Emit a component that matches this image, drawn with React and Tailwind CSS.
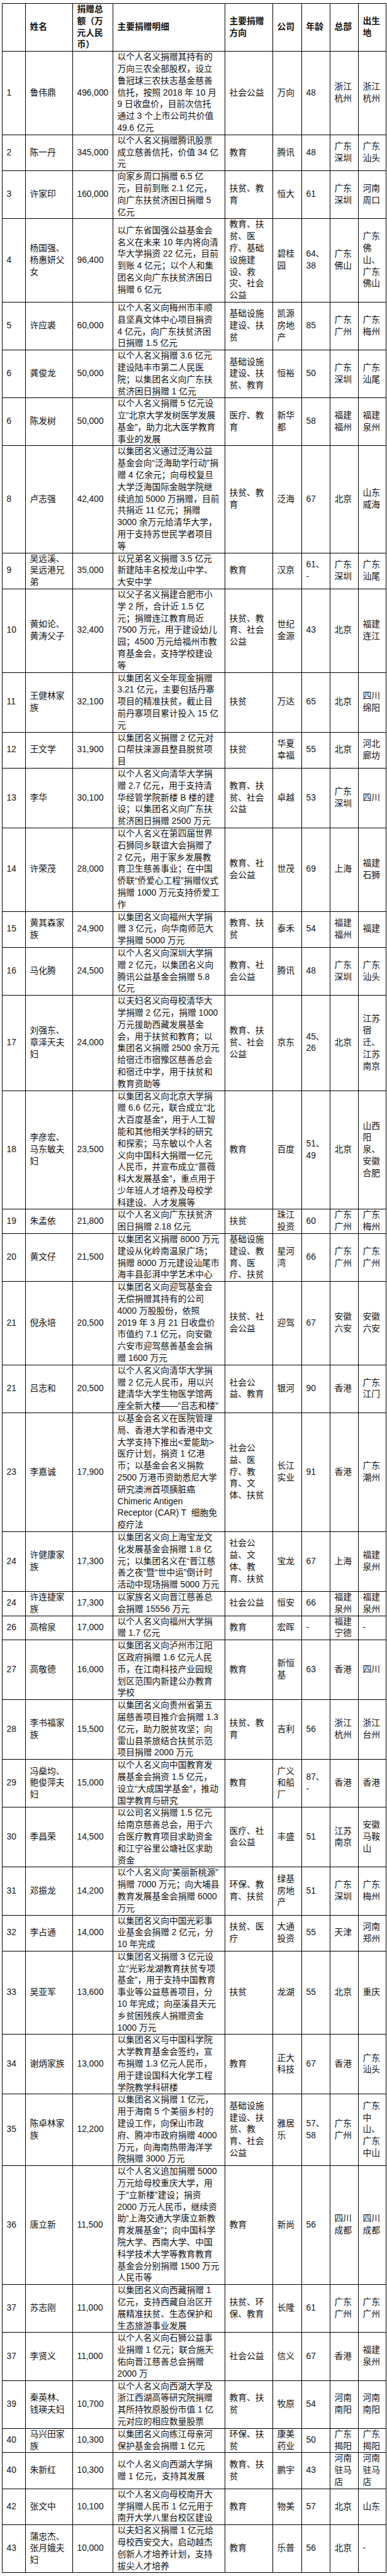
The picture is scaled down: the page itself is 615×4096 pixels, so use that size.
import React from 'react';

// rank, name, amount, detail, direction, company, age, hq, birthplace
const rows = [
  ['1', '鲁伟鼎', '496,000', '以个人名义捐赠其持有的\n万向三农全部股权，设立\n鲁冠球三农扶志基金慈善\n信托，按照 2018 年 10 月\n9 日收盘价，目前次信托\n通过 3 个上市公司共价值\n49.6 亿元', '社会公益', '万向', '48', '浙江\n杭州', '浙江\n杭州'],
  ['2', '陈一丹', '345,000', '以个人名义捐赠腾讯股票\n成立慈善信托，价值 34 亿\n元', '教育', '腾讯', '48', '广东\n深圳', '广东\n汕头'],
  ['3', '许家印', '160,000', '向家乡周口捐赠 6.5 亿\n元，目前到账 2.1 亿元，\n向广东扶贫济困日捐赠 5\n亿元', '扶贫、教\n育', '恒大', '61', '广东\n深圳', '河南\n周口'],
  ['4', '杨国强、\n杨惠妍父\n女', '96,400', '以广东省国强公益基金会\n名义在未来 10 年内将向清\n华大学捐资 22 亿元，目前\n到账 4 亿元；以个人和集\n团名义向广东扶贫济困日\n捐赠 6 亿元', '教育、扶\n贫、医\n疗、基础\n设施建\n设、救\n灾、社会\n公益', '碧桂\n园', '64、\n38', '广东\n佛山', '广东\n佛\n山、\n广东\n佛山'],
  ['5', '许应裘', '60,000', '以个人名义向梅州市丰顺\n县坚真文体中心项目捐资\n4 亿元，向广东扶贫济困\n日捐赠 1.5 亿元', '基础设施\n建设、扶\n贫', '凯源\n房地\n产', '85', '广东\n广州', '广东\n梅州'],
  ['6', '龚俊龙', '50,000', '以个人名义捐赠 3.6 亿元\n建设陆丰市第二人民医\n院；以集团名义向广东扶\n贫济困日捐赠 1 亿元', '基础设施\n建设、扶\n贫、教育', '恒裕', '50', '广东\n深圳', '广东\n汕尾'],
  ['6', '陈发树', '50,000', '以个人名义捐赠 5 亿元设\n立“北京大学发树医学发展\n基金”，助力北大医学教育\n事业的发展', '医疗、教\n育', '新华\n都', '58', '福建\n福州', '福建\n泉州'],
  ['8', '卢志强', '42,400', '以集团名义通过泛海公益\n基金会向“泛海助学行动”捐\n赠 4 亿余元；向母校复旦\n大学泛海国际金融学院继\n续追加 5000 万捐赠，目前\n共捐近 11 亿元；捐赠\n3000 余万元给清华大学，\n用于支持苏世民学者项目\n等', '扶贫、教\n育', '泛海', '67', '北京', '山东\n威海'],
  ['9', '吴远溪、\n吴远港兄\n弟', '35,000', '以兄弟名义捐赠 3.5 亿元\n新建陆丰名校龙山中学、\n大安中学', '教育', '汉京', '61、\n-', '广东\n深圳', '广东\n汕尾'],
  ['10', '黄如论、\n黄涛父子', '32,400', '以父子名义捐建合肥市小\n学 2 所，合计近 1.5 亿\n元；捐赠连江教育局近\n7500 万元，用于建设幼儿\n园；4500 万元给福州市教\n育基金会，支持学校建设\n等', '扶贫、教\n育、社会\n公益', '世纪\n金源', '43', '北京', '福建\n连江'],
  ['11', '王健林家\n族', '32,100', '以集团名义全年现金捐赠\n3.21 亿元，主要包括丹寨\n项目的精准扶贫，截止目\n前丹寨项目累计投入 15 亿\n元', '扶贫', '万达', '65', '北京', '四川\n绵阳'],
  ['12', '王文学', '31,900', '以集团名义捐赠 2 亿元对\n口帮扶涞源县整县脱贫项\n目', '扶贫', '华夏\n幸福', '55', '北京', '河北\n廊坊'],
  ['13', '李华', '30,100', '以个人名义向清华大学捐\n赠 2.7 亿元，用于支持清\n华经管学院新楼 B 楼的建\n设；以集团名义向广东扶\n贫济困日捐赠 2500 万元', '教育、扶\n贫、社会\n公益', '卓越', '53', '广东\n深圳', '四川'],
  ['14', '许荣茂', '28,000', '以个人名义在第四届世界\n石狮同乡联谊大会捐赠了\n2 亿元，用于家乡发展教\n育卫生慈善事业；在中国\n侨联“侨爱心工程”捐赠仪式\n捐赠 1000 万元支持侨爱工\n作', '教育、社\n会公益', '世茂', '69', '上海', '福建\n石狮'],
  ['15', '黄其森家\n族', '24,900', '以集团名义向福州大学捐\n赠 3 亿元，向华南师范大\n学捐赠 5000 万元', '教育、扶\n贫', '泰禾', '54', '福建\n福州', '福建'],
  ['16', '马化腾', '24,500', '以个人名义向深圳大学捐\n赠 2 亿元，以集团名义向\n腾讯公益基金会捐赠 5.8\n亿元', '教育、社\n会公益', '腾讯', '48', '广东\n深圳', '广东\n汕头'],
  ['17', '刘强东、\n章泽天夫\n妇', '24,000', '以夫妇名义向母校清华大\n学捐赠 2 亿元，捐赠 1000\n万元援助西藏发展基金\n会，用于扶贫和教育；以\n集团名义捐赠 2500 余万元\n给宿迁市宿豫区慈善总会\n和宿迁中学，用于扶贫和\n教育资助等', '教育、扶\n贫、社会\n公益', '京东', '45、\n26', '北京', '江苏\n宿\n迁、\n江苏\n南京'],
  ['18', '李彦宏、\n马东敏夫\n妇', '23,500', '以集团名义向北京大学捐\n赠 6.6 亿元，联合成立“北\n大百度基金”，用于人工智\n能和其他相关学科的研究\n和探索；马东敏以个人名\n义向中国科大捐赠一亿元\n人民币，并宣布成立“蔷薇\n科大发展基金”，重点用于\n少年班人才培养及母校学\n科建设、人才发展等', '教育', '百度', '51、\n49', '北京', '山西\n阳\n泉、\n安徽\n合肥'],
  ['19', '朱孟依', '21,800', '以个人名义向广东扶贫济\n困日捐赠 2.18 亿元', '扶贫', '珠江\n投资', '60', '广东\n广州', '广东\n梅州'],
  ['20', '黄文仔', '21,500', '以集团名义捐赠 8000 万元\n建设从化岭南温泉广场；\n捐赠 8000 万元建设汕尾市\n海丰县彭湃中学艺术中心', '基础设施\n建设、教\n育、医\n疗、扶贫', '星河\n湾', '66', '广东\n广州', '广东\n广州'],
  ['21', '倪永培', '20,500', '以集团名义向迎驾基金会\n无偿捐赠其持有的公司\n4000 万股股份，依照\n2019 年 3 月 21 日收盘价\n市值约 7.1 亿元，向安徽\n六安市迎驾慈善基金会捐\n赠 1600 万元', '扶贫、社\n会公益', '迎驾', '67', '安徽\n六安', '安徽\n六安'],
  ['21', '吕志和', '20,500', '以个人名义向清华大学捐\n赠 2 亿元人民币，用以兴\n建清华大学生物医学馆两\n座全新大楼——“吕志和楼”', '社会公\n益、教育', '银河', '90', '香港', '广东\n江门'],
  ['23', '李嘉诚', '17,900', '以基金会名义在医院管理\n局、香港大学和香港中文\n大学支持下推出<爱能助>\n医疗计划，捐资 1 亿港\n币；以基金会名义捐款\n2500 万港币资助悉尼大学\n研究澳洲首项胰脏癌\nChimeric Antigen\nReceptor (CAR) T  细胞免\n疫疗法', '社会公\n益、医\n疗、教\n育、文\n体、扶贫', '长江\n实业', '91', '香港', '广东\n潮州'],
  ['24', '许健康家\n族', '17,300', '以集团名义向上海宝龙文\n化发展基金会捐赠 1.8 亿\n元；以集团名义在“晋江慈\n善之夜”暨“世中运”倒计时\n活动中现场捐赠 5000 万元', '社会公\n益、文\n体、教\n育、扶贫', '宝龙', '67', '上海', '福建\n泉州'],
  ['24', '许连捷家\n族', '17,300', '以家族名义向晋江慈善总\n会捐赠 15556 万元', '社会公益', '恒安', '66', '福建\n泉州', '福建\n泉州'],
  ['26', '高榕泉', '17,000', '以个人名义向福州大学捐\n赠 1.7 亿元', '教育', '宏晖', '-', '福建\n宁德', '-'],
  ['27', '高敬德', '16,000', '以集团名义向泸州市江阳\n区政府捐赠 1.6 亿元人民\n币，在江南科技产业园规\n划区范围内新建公办教育\n学校', '教育', '新恒\n基', '63', '香港', '四川'],
  ['28', '李书福家\n族', '15,500', '以集团名义向贵州省第五\n届慈善项目推介会捐赠 1.3\n亿元，助力脱贫攻坚；向\n雷山县茶旅结合扶贫示范\n项目捐赠 2000 万元', '扶贫、教\n育', '吉利', '56', '浙江\n杭州', '浙江\n台州'],
  ['29', '冯燊均、\n鲍俊萍夫\n妇', '15,000', '以个人名义向中国教育发\n展基金会捐资 1.5 亿元，\n设立“大成国学基金”，推动\n国学教育与研究', '教育', '广义\n和船\n厂', '87、\n-', '香港', '香港'],
  ['30', '季昌荣', '14,500', '以公司名义捐赠 1.5 亿元\n给南京慈善总会，用于六\n合医疗教育项目求助资金\n和江宁谷里公塘社区求助\n资金', '医疗、社\n会公益', '丰盛', '51', '江苏\n南京', '安徽\n马鞍\n山'],
  ['31', '邓振龙', '14,200', '以个人名义向“美丽新桃源”\n捐赠 7000 万元；向大埔县\n教育发展基金会捐赠 6000\n万元', '环保、教\n育、扶贫', '绿基\n房地\n产', '51', '广东\n深圳', '广东\n梅州'],
  ['32', '李占通', '14,000', '以集团名义向中国光彩事\n业基金会捐赠 2 亿元，分\n10 年完成', '扶贫、医\n疗', '大通\n投资', '55', '天津', '河南\n郑州'],
  ['33', '吴亚军', '13,600', '以集团名义捐赠 3 亿元设\n立“光彩龙湖教育扶贫专项\n基金”，用于支持中国教育\n事业等公益慈善项目，分\n10 年完成；向巫溪县天元\n乡贫困残疾人捐赠资金\n1000 万元', '扶贫', '龙湖', '55', '北京', '重庆'],
  ['34', '谢炳家族', '13,000', '以集团名义与中国科学院\n大学教育基金会签约，宣\n布捐赠 1.3 亿元人民币，\n用于建设国科大化学工程\n学院教学科研楼', '教育', '正大\n科技', '67', '香港', '广东\n汕头'],
  ['35', '陈卓林家\n族', '12,200', '以集团名义捐赠 1 亿元，\n用于海南 5 个美丽乡村的\n建设工作，向保山市政\n府、腾冲市政府捐赠 4000\n万元，向海南热带海洋学\n院捐赠 3000 万元', '基础设施\n建设、扶\n贫、教\n育、社会\n公益', '雅居\n乐', '57、\n58', '广东\n广州', '广东\n中\n山、\n广东\n中山'],
  ['36', '唐立新', '11,500', '以个人名义追加捐赠 5000\n万元给母校重庆大学，用\n于“立新楼”建设；捐资\n2000 万元人民币，继续资\n助“上海交通大学唐立新教\n育发展基金”；向中国科学\n院大学、西南大学、中国\n科学技术大学等教育教育\n基金会分别捐赠 1500 万元\n人民币等', '教育', '新尚', '56', '四川\n成都', '四川\n成都'],
  ['37', '苏志刚', '11,000', '以集团名义向西藏捐赠 1\n亿元，支持西藏自治区开\n展精准扶贫、生态保护和\n生态旅游事业发展', '扶贫、环\n保、教育', '长隆', '61', '广东\n广州', '广东\n广州'],
  ['37', '李贤义', '11,000', '以个人名义向石狮公益事\n业捐赠 1 亿元；联合施天\n佑向晋江慈善总会捐赠\n2000 万', '社会公益', '信义', '67', '香港', '福建\n泉州'],
  ['39', '秦英林、\n钱瑛夫妇', '10,700', '以个人名义向西湖大学及\n浙江西湖高等研究院捐赠\n其所持牧原股份市值 1 亿\n元对应的相应数量股票', '教育、扶\n贫', '牧原', '54', '河南\n南阳', '河南\n南阳'],
  ['40', '马兴田家\n族', '10,300', '以集团名义向练江母亲河\n保护基金会捐赠 1 亿元', '环保、扶\n贫', '康美\n药业', '50', '广东\n揭阳', '广东\n揭阳'],
  ['40', '朱新红', '10,300', '以个人名义向西湖大学捐\n赠 1 亿元，支持其发展', '教育、扶\n贫', '鹏宇', '43', '河南\n驻马\n店', '河南\n驻马\n店'],
  ['42', '张文中', '10,100', '以个人名义向母校南开大\n学捐赠人民币 1 亿元用于\n南开大学八里台校区建设', '教育', '物美', '57', '北京', '山东'],
  ['43', '蒲忠杰、\n张月娥夫\n妇', '10,000', '以夫妇名义捐赠 1 亿元给\n母校西安交大，启动越杰\n创新人才培养计划，支持\n拔尖人才培养', '教育', '乐普', '56', '北京', '-'],
];

const headers = ['', '姓名', '捐赠总\n额（万\n元人民\n币）', '主要捐赠明细', '主要捐赠\n方向', '公司', '年龄', '总部', '出生\n地'];

const cell = 'border border-black pl-[6.5px] pr-[2px] py-0 align-middle text-left whitespace-pre';

const App = () => {
  return (
    <div className="min-h-[4096px] bg-white pl-[3px] pt-[5px]">
      <table className="w-[610px] table-fixed border-collapse font-['Liberation_Sans','Noto_Sans_CJK_SC',sans-serif] text-[13.75px] leading-[18.79px] text-[#111]">
        <colgroup>
          <col className="w-[37px]" />
          <col className="w-[75px]" />
          <col className="w-[64px]" />
          <col className="w-[178px]" />
          <col className="w-[76px]" />
          <col className="w-[46px]" />
          <col className="w-[45px]" />
          <col className="w-[45px]" />
          <col className="w-[44px]" />
        </colgroup>
        <thead>
          <tr className="font-bold">
            {headers.map((h, i) => (
              <th key={i} className={cell}>{h}</th>
            ))}
          </tr>
        </thead>
        <tbody>
          {rows.map((row, r) => (
            <tr key={r}>
              {row.map((text, c) => (
                <td key={c} className={cell}>{text}</td>
              ))}
            </tr>
          ))}
        </tbody>
      </table>
    </div>
  );
};

export default App;
